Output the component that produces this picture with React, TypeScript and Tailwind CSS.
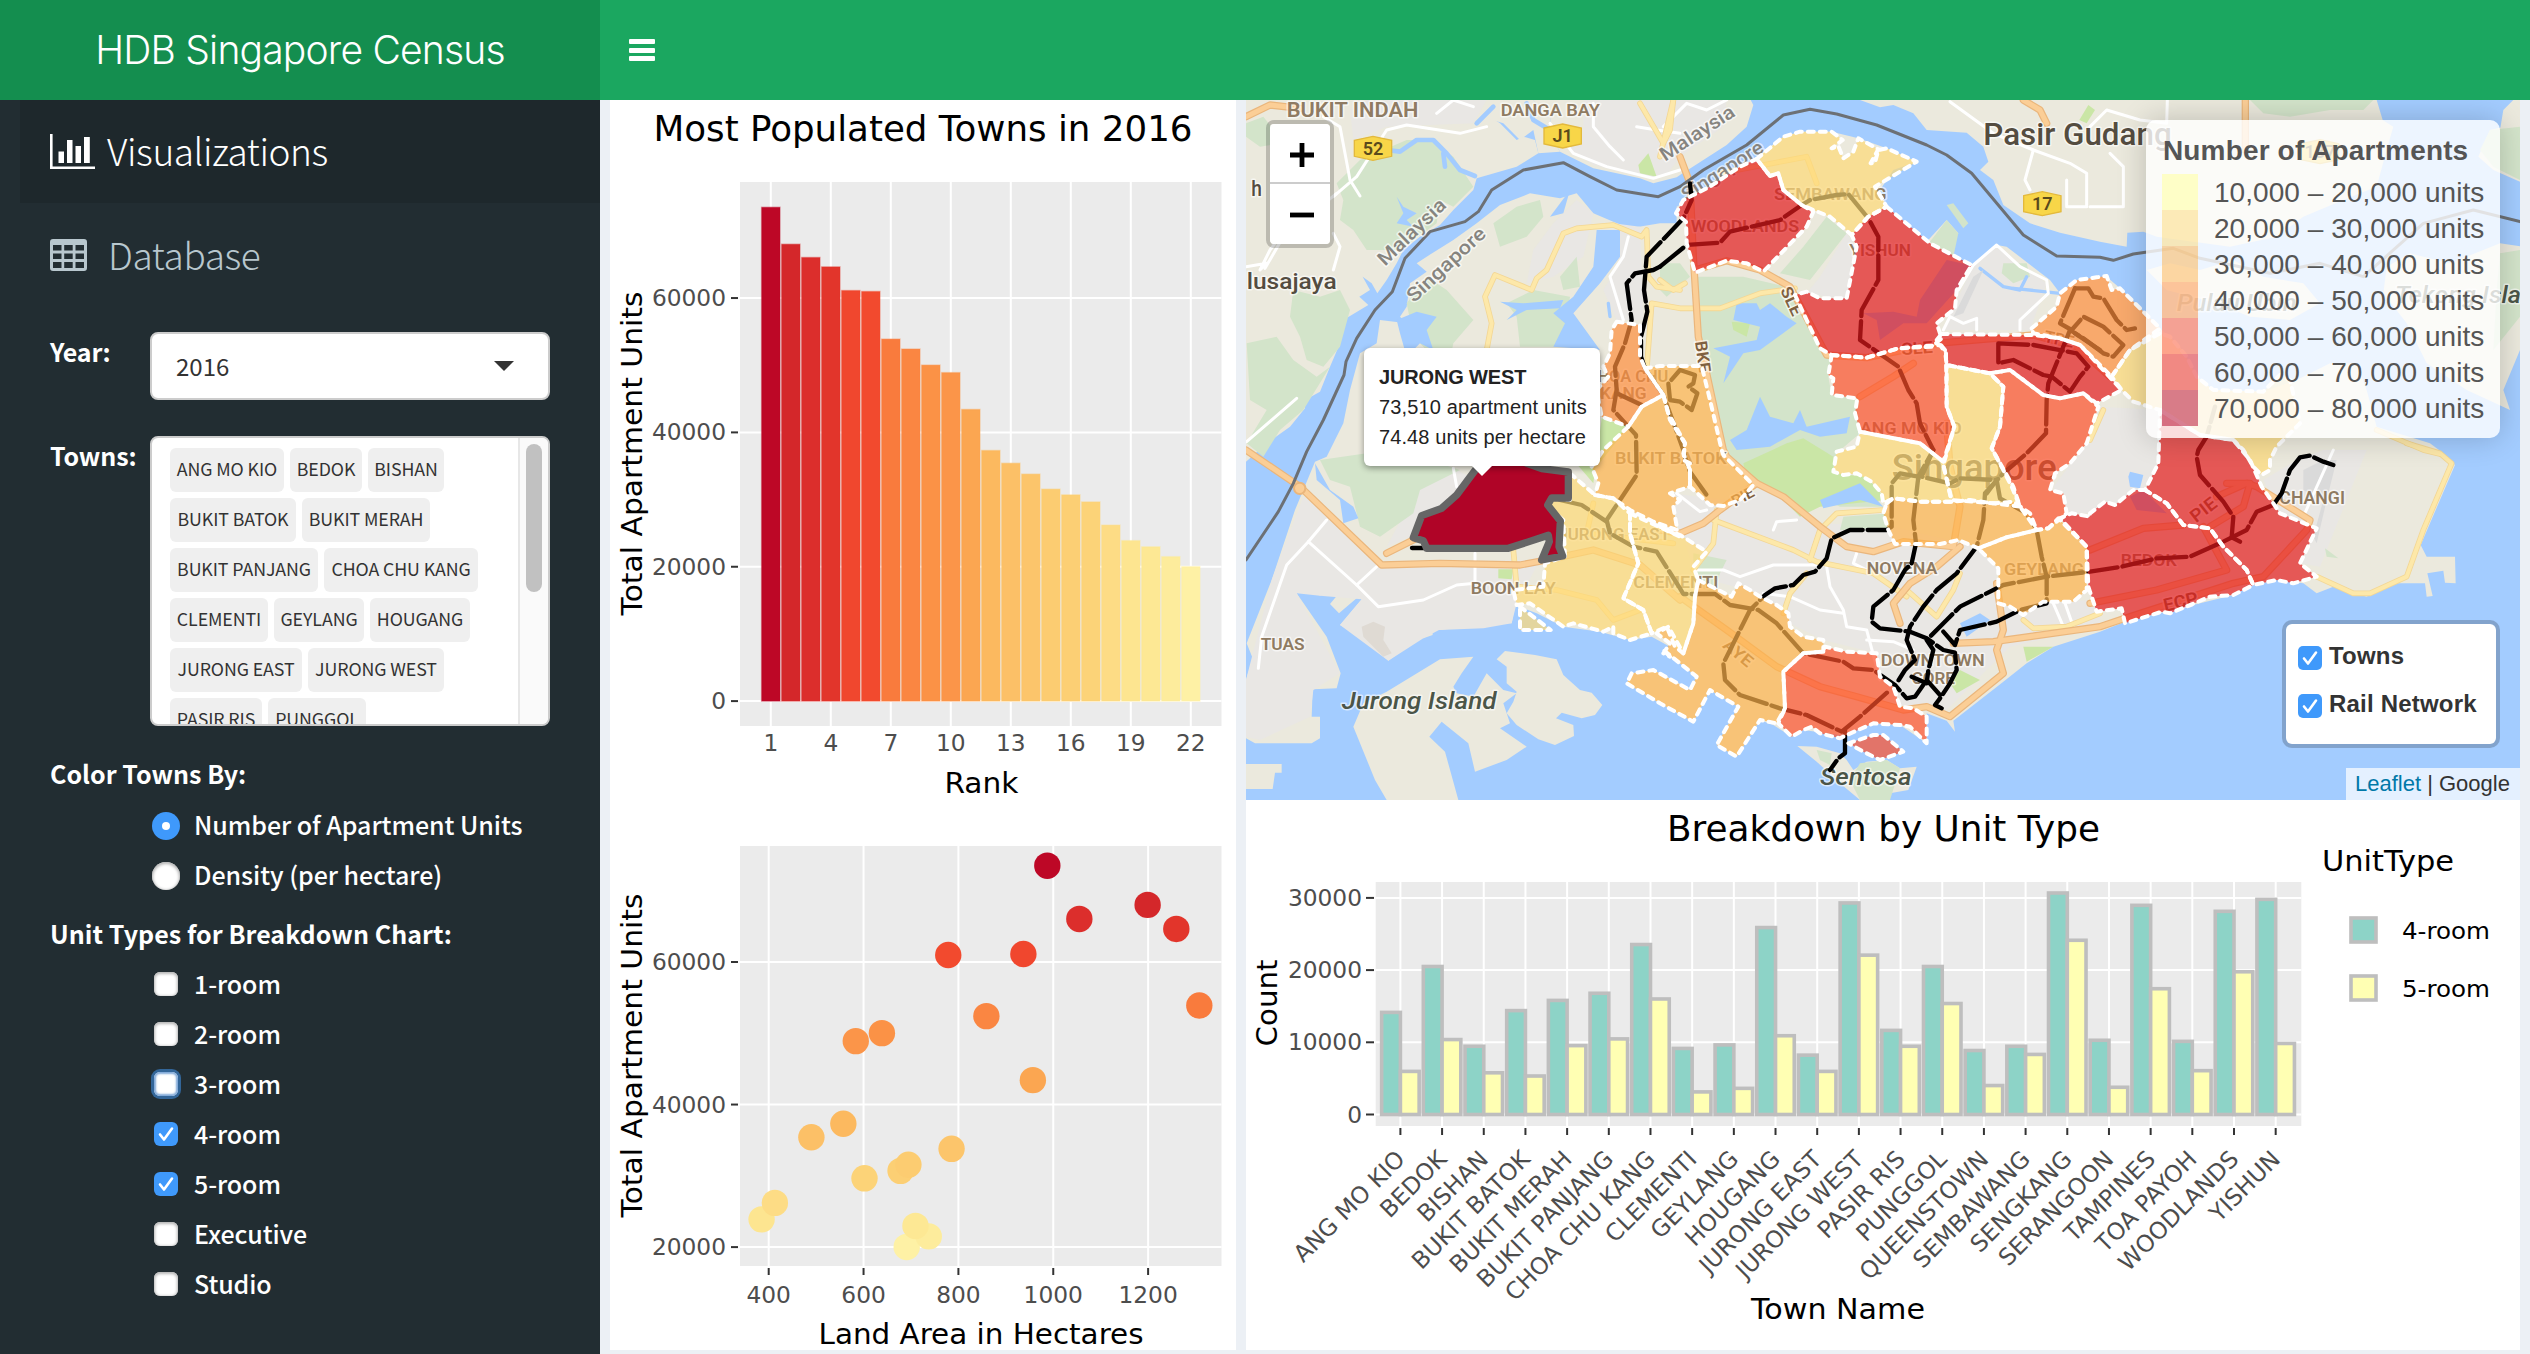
import React from 'react';

/* ---------- Data ---------- */

const RANKED = [
  { units: 73510, area: 987.5, color: '#bd0726' },
  { units: 68010, area: 1199, color: '#d4272a' },
  { units: 66040, area: 1055, color: '#dc2e2c' },
  { units: 64640, area: 1259.5, color: '#e2352b' },
  { units: 61120, area: 937, color: '#f0472e' },
  { units: 60980, area: 778.6, color: '#f24a2e' },
  { units: 53890, area: 1308, color: '#f97b3d' },
  { units: 52410, area: 859, color: '#fa8642' },
  { units: 50020, area: 638.7, color: '#fb9246' },
  { units: 48900, area: 583.6, color: '#fb9549' },
  { units: 43420, area: 957, color: '#fba651' },
  { units: 37310, area: 557.4, color: '#fcb95f' },
  { units: 35410, area: 490, color: '#fcc067' },
  { units: 33790, area: 785.6, color: '#fcc56b' },
  { units: 31550, area: 694.6, color: '#fccc71' },
  { units: 30700, area: 678, color: '#fccf74' },
  { units: 29650, area: 602, color: '#fcd378' },
  { units: 26200, area: 413, color: '#fddc85' },
  { units: 23890, area: 385, color: '#fde590' },
  { units: 22970, area: 709.5, color: '#fde894' },
  { units: 21500, area: 737.5, color: '#fdec9c' },
  { units: 20020, area: 691, color: '#fef1a5' },
];

const BREAKDOWN: [string, number, number][] = [
  ['ANG MO KIO', 14140, 5970],
  ['BEDOK', 20500, 10380],
  ['BISHAN', 9450, 5775],
  ['BUKIT BATOK', 14390, 5330],
  ['BUKIT MERAH', 15800, 9540],
  ['BUKIT PANJANG', 16790, 10470],
  ['CHOA CHU KANG', 23540, 16000],
  ['CLEMENTI', 9150, 3130],
  ['GEYLANG', 9640, 3620],
  ['HOUGANG', 25890, 10910],
  ['JURONG EAST', 8220, 5970],
  ['JURONG WEST', 29300, 22070],
  ['PASIR RIS', 11650, 9450],
  ['PUNGGOL', 20500, 15370],
  ['QUEENSTOWN', 8860, 4010],
  ['SEMBAWANG', 9450, 8320],
  ['SENGKANG', 30680, 24130],
  ['SERANGOON', 10280, 3770],
  ['TAMPINES', 28970, 17420],
  ['TOA PAYOH', 10130, 6070],
  ['WOODLANDS', 28140, 19770],
  ['YISHUN', 29800, 9840],
];

/* ---------- Sidebar ---------- */

const TAG_ROWS: [string, string][][] = [
  [['ANG MO KIO', 'w-[114px]'], ['BEDOK', 'w-[72px]'], ['BISHAN', 'w-[76px]']],
  [['BUKIT BATOK', 'w-[126px]'], ['BUKIT MERAH', 'w-[128px]']],
  [['BUKIT PANJANG', 'w-[148px]'], ['CHOA CHU KANG', 'w-[154px]']],
  [['CLEMENTI', 'w-[98px]'], ['GEYLANG', 'w-[90px]'], ['HOUGANG', 'w-[100px]']],
  [['JURONG EAST', 'w-[132px]'], ['JURONG WEST', 'w-[136px]']],
  [['PASIR RIS', 'w-[92px]'], ['PUNGGOL', 'w-[98px]']],
];

function Check() {
  return (
    <svg viewBox="0 0 24 24" className="h-6 w-6">
      <path d="M6 12.5 10 17.5 18 6.5" fill="none" stroke="#fff" strokeWidth="2.6" strokeLinecap="round" strokeLinejoin="round" />
    </svg>
  );
}

function CheckRow({ label, state }: { label: string; state?: 'checked' | 'focus' }) {
  const box =
    state === 'checked'
      ? 'bg-[#3f99fb]'
      : state === 'focus'
        ? 'bg-white shadow-[0_0_0_3px_#336699,inset_0_0_2px_2px_#7fa8d8]'
        : 'bg-white shadow-[inset_0_1px_3px_1px_#b5b5b5]';
  return (
    <div className="flex h-[50px] items-center pl-[154px]">
      <span className={`h-6 w-6 shrink-0 rounded-[6px] ${box}`}>{state === 'checked' && <Check />}</span>
      <span className="mb-[3px] ml-[16px] whitespace-nowrap text-[25px] leading-[30px] font-medium tracking-[-0.1px]">{label}</span>
    </div>
  );
}

function Sidebar() {
  return (
    <aside className="flex w-[600px] shrink-0 flex-col overflow-hidden bg-[#222d32] font-['Noto_Sans_CJK_SC','Noto_Sans',sans-serif] text-white">
      <div className="ml-5 flex h-[103px] items-center bg-[#1e282c] pl-[30px]">
        <svg viewBox="0 0 45 35" className="h-[35px] w-[45px]" fill="#fff">
          <path d="M0 0h2.6v32.4H45V35H0zM8.500 17.500h5.500v11.500H8.500zM17 6h5.500v23H17zM25.500 12h5.500v17h-5.500zM34 3h5.800v26H34z" />
        </svg>
        <span className="mb-[4px] ml-[12px] text-[37px] leading-[50px] font-light tracking-[-0.4px]">Visualizations</span>
      </div>
      <div className="ml-5 flex h-[103px] items-center pl-[30px] text-[#b8c7ce]">
        <svg viewBox="0 0 37 32" className="h-[32px] w-[37px]">
          <path
            fill="currentColor"
            fillRule="evenodd"
            d="M3 0h31a3 3 0 0 1 3 3v26a3 3 0 0 1-3 3H3a3 3 0 0 1-3-3V3a3 3 0 0 1 3-3zM3 6v5.500h8.500V6zM14.200 6v5.500h8.500V6zM25.500 6v5.500H34V6zM3 14.500V20h8.500v-5.500zM14.200 14.500V20h8.500v-5.500zM25.500 14.500V20H34v-5.500zM3 23v6h8.500v-6zM14.200 23v6h8.500v-6zM25.500 23v6H34v-6z"
          />
        </svg>
        <span className="mb-[2px] ml-[21px] text-[37px] leading-[50px] font-light tracking-[-0.4px]">Database</span>
      </div>
      <div className="mt-[26px] flex">
        <div className="w-[100px] pt-[2px] pl-[50px] text-[25px] leading-[34px] font-bold tracking-[-0.2px]">Year:</div>
        <div className="ml-[50px] flex h-[68px] w-[400px] items-center justify-between rounded-[8px] border-2 border-[#ccc] bg-white pr-[34px] pl-[24px] text-[24px] text-[#333]">
          <span>2016</span>
          <svg viewBox="0 0 20 10" className="h-[10px] w-5">
            <path d="M0 0H20L10 10z" fill="#333" />
          </svg>
        </div>
      </div>
      <div className="mt-9 flex">
        <div className="w-[100px] pt-[2px] pl-[50px] text-[25px] leading-[34px] font-bold whitespace-nowrap tracking-[-0.1px]">Towns:</div>
        <div className="ml-[50px] flex h-[290px] w-[400px] overflow-hidden rounded-[8px] border-2 border-[#ccc] bg-white">
          <div className="flex flex-1 flex-col gap-[6px] pt-[10px] pl-[18px]">
            {TAG_ROWS.map((row, i) => (
              <div key={i} className="flex shrink-0 gap-[6px]">
                {row.map(([name, w]) => (
                  <span key={name} className={`flex h-11 items-center justify-center rounded-[6px] bg-[#efefef] pb-[3px] text-[17.800px] tracking-[-0.1px] whitespace-nowrap text-[#333] ${w}`}>
                    {name}
                  </span>
                ))}
              </div>
            ))}
          </div>
          <div className="w-[30px] border-l-2 border-[#e7e7e7] bg-[#fafafa] pt-[6px] pl-[6px]">
            <div className="h-[148px] w-4 rounded-full bg-[#c1c1c1]" />
          </div>
        </div>
      </div>
      <div className="mt-[30px] pl-[50px] text-[25px] leading-[34px] font-bold tracking-[0.03px]">Color Towns By:</div>
      <div className="mt-[11px] flex h-[50px] items-center pl-[152px]">
        <span className="flex h-7 w-7 items-center justify-center rounded-full bg-[#3f99fb]">
          <span className="h-2 w-2 rounded-full bg-white" />
        </span>
        <span className="mb-[4px] ml-[14px] text-[25px] leading-[30px] font-medium whitespace-nowrap tracking-[-0.05px]">Number of Apartment Units</span>
      </div>
      <div className="flex h-[50px] items-center pl-[152px]">
        <span className="h-7 w-7 rounded-full bg-white shadow-[inset_0_1px_3px_1px_#b5b5b5]" />
        <span className="mb-[4px] ml-[14px] text-[25px] leading-[30px] font-medium whitespace-nowrap tracking-[-0.05px]">Density (per hectare)</span>
      </div>
      <div className="mt-[15px] mb-[9px] pl-[50px] text-[25px] leading-[34px] font-bold whitespace-nowrap tracking-[0.05px]">
        Unit Types for Breakdown Chart:
      </div>
      <CheckRow label="1-room" />
      <CheckRow label="2-room" />
      <CheckRow label="3-room" state="focus" />
      <CheckRow label="4-room" state="checked" />
      <CheckRow label="5-room" state="checked" />
      <CheckRow label="Executive" />
      <CheckRow label="Studio" />
    </aside>
  );
}

/* ---------- Charts ---------- */

const CHART_FONT = "font-['DejaVu_Sans',Verdana,sans-serif]";

function Label({ x, y, size, w, children, anchor = 'middle', fill = '#000', vertical }: {
  x: number; y: number; size: number; w?: number; children: React.ReactNode; anchor?: 'start' | 'middle' | 'end'; fill?: string; vertical?: boolean;
}) {
  return (
    <text x={x} y={y} fontSize={size} textAnchor={anchor} fill={fill} textLength={w} lengthAdjust="spacingAndGlyphs" transform={vertical ? `rotate(-90 ${x} ${y})` : undefined}>
      {children}
    </text>
  );
}

function RankCharts() {
  const x = (rank: number) => 770.8 + (rank - 1) * 20;
  const y = (v: number) => 701.1 - (v / 20000) * 134.35;
  const sx = (a: number) => 768.7 + ((a - 400) / 200) * 94.85;
  const sy = (v: number) => 1247.1 - ((v - 20000) / 20000) * 142.55;
  return (
    <svg viewBox="610 100 626 1250" className={`h-[1250px] w-[626px] ${CHART_FONT}`}>
      <Label x={923} y={140.5} size={35} w={539}>Most Populated Towns in 2016</Label>
      <rect x="740" y="182" width="481.500" height="544" fill="#ebebeb" />
      {[0, 20000, 40000, 60000].map((v) => (
        <g key={v}>
          <path d={`M740 ${y(v)}H1221.500`} stroke="#fff" strokeWidth="2" />
          <path d={`M731 ${y(v)}H738`} stroke="#333" strokeWidth="2" />
          <Label x={726} y={y(v) + 8} size={23.300} anchor="end" fill="#4d4d4d">{v}</Label>
        </g>
      ))}
      {[1, 4, 7, 10, 13, 16, 19, 22].map((r) => (
        <g key={r}>
          <path d={`M${x(r)} 182V726`} stroke="#fff" strokeWidth="2" />
          <Label x={x(r)} y={750.500} size={23.300} fill="#4d4d4d">{r}</Label>
        </g>
      ))}
      {RANKED.map((t, i) => (
        <rect key={i} x={x(i + 1) - 9.200} y={y(t.units)} width="18.400" height={y(0) - y(t.units)} fill={t.color} stroke={t.color} strokeWidth="1.400" strokeOpacity="0.4" />
      ))}
      <Label x={981.400} y={793} size={29.200} w={74}>Rank</Label>
      <Label x={641.500} y={453.500} size={29.200} w={324} vertical>Total Apartment Units</Label>

      <rect x="740" y="846" width="481.500" height="420" fill="#ebebeb" />
      {[20000, 40000, 60000].map((v) => (
        <g key={v}>
          <path d={`M740 ${sy(v)}H1221.500`} stroke="#fff" strokeWidth="2" />
          <path d={`M731 ${sy(v)}H738`} stroke="#333" strokeWidth="2" />
          <Label x={726} y={sy(v) + 8} size={23.300} anchor="end" fill="#4d4d4d">{v}</Label>
        </g>
      ))}
      {[400, 600, 800, 1000, 1200].map((a) => (
        <g key={a}>
          <path d={`M${sx(a)} 846V1266`} stroke="#fff" strokeWidth="2" />
          <path d={`M${sx(a)} 1268V1275`} stroke="#333" strokeWidth="2" />
          <Label x={sx(a)} y={1302.500} size={23.300} fill="#4d4d4d">{a}</Label>
        </g>
      ))}
      {[...RANKED].reverse().map((t, i) => (
        <circle key={i} cx={sx(t.area)} cy={sy(t.units)} r="13.200" fill={t.color} />
      ))}
      <Label x={981} y={1343.500} size={29.200} w={325}>Land Area in Hectares</Label>
      <Label x={641.500} y={1055.500} size={29.200} w={324} vertical>Total Apartment Units</Label>
    </svg>
  );
}

function BreakdownChart() {
  const x = (i: number) => 1400.400 + i * 41.680;
  const y = (v: number) => 1114.500 - (v / 10000) * 72.200;
  const half = 18.750;
  return (
    <svg viewBox="1246 800 1274 550" className={`h-[550px] w-[1274px] ${CHART_FONT}`}>
      <Label x={1883.500} y={840.5} size={35} w={433}>Breakdown by Unit Type</Label>
      <rect x="1375.700" y="882" width="925.600" height="244" fill="#ebebeb" />
      {[0, 10000, 20000, 30000].map((v) => (
        <g key={v}>
          <path d={`M1375.700 ${y(v)}H2301.300`} stroke="#fff" strokeWidth="2" />
          <path d={`M1366 ${y(v)}H1374`} stroke="#333" strokeWidth="2" />
          <Label x={1362} y={y(v) + 8} size={23.300} anchor="end" fill="#4d4d4d">{v}</Label>
        </g>
      ))}
      {BREAKDOWN.map(([name, four, five], i) => (
        <g key={name}>
          <path d={`M${x(i)} 882V1126`} stroke="#fff" strokeWidth="2" />
          <path d={`M${x(i)} 1128V1135`} stroke="#333" strokeWidth="2" />
          <rect x={x(i) - half} y={y(four)} width={half} height={y(0) - y(four)} fill="#8dd3c7" stroke="#bebebe" strokeWidth="3.600" />
          <rect x={x(i)} y={y(five)} width={half} height={y(0) - y(five)} fill="#ffffb3" stroke="#bebebe" strokeWidth="3.600" />
          <text x={x(i) + 6} y={1160.500} fontSize="23.400" textAnchor="end" fill="#4d4d4d" transform={`rotate(-45 ${x(i) + 6} 1160.500)`}>
            {name}
          </text>
        </g>
      ))}
      <Label x={1838} y={1319.400} size={29.200} w={174}>Town Name</Label>
      <Label x={1277} y={1003} size={29.200} w={87} vertical>Count</Label>
      <Label x={2322} y={870.700} size={29.200} w={132} anchor="start">UnitType</Label>
      <rect x="2351" y="918" width="25" height="24" fill="#8dd3c7" stroke="#bebebe" strokeWidth="3.600" />
      <rect x="2351" y="976" width="25" height="24" fill="#ffffb3" stroke="#bebebe" strokeWidth="3.600" />
      <Label x={2402} y={939} size={23.300} w={88} anchor="start">4-room</Label>
      <Label x={2402} y={997} size={23.300} w={88} anchor="start">5-room</Label>
    </svg>
  );
}

/* ---------- Map ---------- */

/* Origin of every map tile; geometry is stored relative to its tile. */
const TILE: Record<string, [number, number]> = {
  a: [0, 0], b: [1260, 0], c: [2550, 0],
  d: [0, 1080], e: [1260, 1080], f: [2550, 1080],
};

/* "a 10,20 30,40 b 5,6" -> list of points in map space */
function pts(src: string): string {
  let o: [number, number] = [0, 0];
  const out: string[] = [];
  src.trim().split(/\s+/).forEach((tok) => {
    if (TILE[tok]) { o = TILE[tok]; return; }
    const [px, py] = tok.split(',').map(Number);
    out.push(`${px + o[0]},${py + o[1]}`);
  });
  return out.join(' ');
}

const LAND = [
  'a 18,30 740,30 760,50 800,30 880,30 930,80 940,150 960,185 1060,235 1200,265 1240,280 1310,262 b 60,255 130,210 200,165 260,110 280,45 272,30 a 18,30 18,1115 80,1060 150,1010 195,955 195,930 240,905 270,830 300,760 310,690 385,645 358,620 390,600 368,560 395,580 412,610 440,570 470,520 490,480 540,440 600,405 640,360 700,300 710,265 830,230 895,190 885,150 850,140 830,150 780,100 750,80 740,30',
  'a 18,30 880,30 930,80 940,150 960,185 895,190 880,120 840,150 790,100 740,85 690,100 500,150 18,300',
  'b 600,30 660,52 700,45 760,70 800,120 920,128 970,170 985,215 960,240 1000,270 1030,345 1110,400 1200,428 1320,455 c 110,470 112,428 160,425 200,440 420,470 560,440 640,380 760,330 860,290 890,180 910,110 878,90 860,30',
  'c 1270,30 1300,30 1300,110 1230,120 1240,60',
  'c 1165,200 1200,120 1290,100 1290,275 1210,240',
  'c 170,540 240,520 330,540 430,510 520,560 640,580 690,640 600,690 480,680 380,640 230,600',
  'c 890,530 960,490 1080,520 1230,460 1300,470 1290,780 1240,900 1260,960 1130,900 1010,820 950,700 880,610',
  'd 225,35 165,180 95,390 20,580 38,625 18,690 18,865 45,880 215,880 240,865 240,800 215,800 218,718 290,715 302,670 260,560 170,430 195,395 240,437 300,390 320,402 270,462 297,490 355,440 365,448 300,525 365,560 445,632 515,580 470,510 470,480 497,480 505,525 550,565 578,555 570,455 585,460 597,540 685,530 690,480 710,468 735,495 732,535 760,518 815,520 825,465 890,490 970,530 1080,545 1170,570 1235,560 1290,590 e 10,600 110,680 90,720 40,690 d 1240,660 1175,670 1160,700 e 0,760 100,815 150,720 235,770 170,885 230,920 300,810 340,825 395,860 430,840 540,855 640,820 720,825 800,880 800,790 860,812 885,845 880,812 1030,695 1100,640 1180,590 1320,545 f 105,515 210,490 430,435 490,405 560,390 640,400 680,430 730,410 830,440 900,400 1005,400 1010,440 1028,438 1012,370 1060,362 1065,398 1097,400 1095,320 1010,320 992,285 1095,45 1060,10 c 1020,1060 860,1010 830,900 800,820 720,820 620,870 520,905 370,900 320,860 270,770 210,715 90,595 50,560 b 1250,570 1200,610 1170,570 1040,470 1010,465 935,525 850,490 895,430 860,390 800,455 740,400 680,350 660,300 700,240 770,215 680,175 595,145 515,125 420,125 370,140 280,207 150,290 50,350 a 1310,400 1260,400 1170,415 1120,395 1060,370 1010,310 960,325 870,310 780,345 710,400 640,450 560,500 530,520 560,545 510,580 500,650 480,680 500,700 420,690 410,760 360,790 330,900 310,1000 260,1100',
  'd 440,725 600,628 700,620 665,670 640,710 650,730 700,740 740,670 790,720 830,730 790,760 810,820 780,835 860,890 800,930 705,965 685,880 605,815 568,860 615,905 655,1050 440,1050 405,990 340,830 370,760',
  'd 770,628 795,603 885,615 950,628 970,675 1020,720 1055,728 1087,765 1065,795 1025,805 965,788 948,805 1000,825 1002,858 945,885 895,868 830,825 800,790 820,755 830,725 800,700 800,650',
  'd 18,942 125,942 125,968 105,968 98,1017 18,1017',
  'e 412,888 470,890 540,910 560,930 580,960 620,935 680,930 720,955 770,950 745,1020 690,1030 680,1050 600,1050 540,1000 470,935',
];

const URBAN = [
  'a 380,30 740,30 700,100 440,110 340,150 330,60',
  'a 1030,30 1320,30 b 200,30 190,110 60,200 20,255 a 1240,270 1060,225 980,170 1030,130',
  'a 940,400 1010,330 1060,370 1030,500 940,560 860,580 880,480',
  'a 1120,400 1200,410 1210,690 1130,690 1090,600 1140,520',
  'b 440,610 560,630 590,470 560,430 480,560',
  'b 850,720 940,525 1010,470 1160,580 1110,720',
  'd 190,140 300,210 430,340 900,330 830,460 815,520 730,535 597,540 550,565 445,632 300,525 365,448 240,437 170,430 300,670 220,720 210,800 60,870 18,860 18,690 95,390',
  'd 530,120 580,70 650,60 690,80 620,170 540,190 510,260 440,290',
  'e 30,130 200,150 340,110 480,220 700,230 950,290 1010,350 1010,460 1150,455 1320,450 1320,530 1050,590 860,780 800,760 720,770 660,680 650,610 490,570 390,520 300,430 110,380 60,240',
  'c 30,950 210,960 205,1130 f 160,115 75,165 0,190 e 1220,190 1180,110 b 1280,1060',
  'f 520,90 620,30 700,0 830,0 690,350 630,340 680,235 570,190',
];

const PARK = [
  'a 18,100 70,80 110,130 120,160 60,170 18,140',
  'a 360,210 500,150 570,150 640,200 700,290 640,350 600,330 590,400 480,480 380,480 340,420 300,390 310,330 290,280',
  'a 20,760 110,740 160,810 230,860 270,830 190,960 120,1020 70,1100 20,1060 80,960 30,930',
  'a 160,600 240,620 300,600 330,660 300,770 250,830 200,810 180,740 150,680',
  'a 500,640 560,560 620,600 700,690 640,760 620,860 560,780 520,740',
  'a 760,400 830,350 900,330 910,380 860,440 780,470',
  'a 880,600 990,620 980,690 1050,760 960,770 840,770 830,680 800,640',
  'a 960,560 1010,500 1020,590 970,600',
  'd 240,30 380,10 540,20 660,60 540,120 520,190 420,260 360,230 330,110 270,90',
  'b 105,560 250,560 380,590 405,640 480,775 515,800 505,860 515,915 590,925 600,1030 530,1090 e 520,60 600,90 670,170 540,170 450,130 340,100 260,90 b 190,1080 150,930 125,800 105,700',
  'b 430,470 500,380 560,430 450,570 360,550',
  'b 0,520 60,520 90,560 20,620 0,600',
  'b 810,455 860,390 895,430 880,500',
  'b 1030,520 1100,520 1110,560 1060,580 1025,550',
  'b 860,345 880,340 925,400 910,415',
  'e 100,310 200,330 180,370 160,430 100,400',
  'e 550,200 690,190 690,235 540,240',
  'c 480,30 850,30 820,60 720,60 600,80 520,70',
  'c 1170,180 1200,120 1290,110 1290,270 1210,230',
  'c 1230,490 1290,480 1290,680 1210,780 1220,600',
  'f 705,295 745,325 710,320',
  'e 470,900 515,910 510,945 480,930',
  'e 600,940 680,930 720,955 690,1050 600,1050 570,990',
];

const BRIGHT = [
  'a 1195,225 1225,190 1250,260 1200,250',
  'b 1258,90 1285,45 1305,60 1280,100',
  'b 215,695 270,700 260,740 220,720',
  'b 250,1120 380,1060 430,1045 520,1100 e 520,70 620,80 680,150 480,170 420,200 340,120 260,90',
  'a 1085,985 1165,1010 1070,1130 d 1055,50 1000,30 1060,100',
  'd 775,358 820,358 815,388 775,385',
  'e 870,700 900,660 960,690 890,730',
  'e 1090,590 1180,590 1100,635',
];

const PALE_WATER = [
  'a 470,690 530,665 590,680 560,720 580,780 540,760 500,800 480,730',
  'a 940,670 1000,620 1060,530 1070,420 1140,420 1140,500 1080,580 1000,670 1080,780 940,770 975,700',
  'a 780,635 850,640 970,630 960,655 860,660 800,690 830,660',
  'a 930,380 990,300 970,370',
  'a 470,320 490,350 530,370 500,390 520,410 470,400 490,370',
  'b 220,690 230,640 290,640 300,660 330,640 380,680 410,700 300,780 250,790 190,880 210,800 160,775 290,750 300,710',
  'b 210,1050 260,1020 300,920 330,980 400,1000 420,960 440,1010 570,980 560,1030 480,1040 420,1020 330,1070 230,1080',
  'e 480,150 600,100 670,170 600,150 490,175',
  'b 610,670 700,665 770,680 780,630 860,510 930,525 890,600 800,700 730,700 660,750 650,690',
  'd 225,40 270,120 340,170 355,205 310,220 300,150 230,90',
  'e 900,520 960,490 990,510 920,560',
  'f 115,80 120,65 160,75 150,115 120,110',
  'f 120,140 160,120 230,190 140,180',
];

const WHITE_ROADS = [
  'a 250,80 300,110 330,270 360,318',
  'a 280,320 350,260 440,120 500,105 660,130 740,110',
  'a 18,530 80,520 60,540 90,480 120,440',
  'a 75,535 130,440 290,310',
  'a 280,430 300,470 280,540',
  'a 590,70 640,30 700,50',
  'a 930,100 1000,190 1100,230 1240,265 1320,240',
  'a 1060,40 1060,110 1110,170 1150,210',
  'a 1190,110 1250,120 1320,130',
  'a 1165,440 1150,500 1110,560 1150,690',
  'a 20,1055 170,925',
  'b 10,110 80,40 140,60 200,30',
  'b 870,35 1000,130 1120,180 1230,220 1280,250 1280,350 1220,350 1220,270',
  'b 1120,180 1095,270 1110,300',
  'b 850,720 870,680 910,700 950,685 950,720',
  'b 895,600 940,525 1010,465 1080,530 1160,570 1165,610 1080,690 1080,720',
  'c 0,110 50,60 150,90 230,100 232,30',
  'c 60,190 100,230 100,350 0,350',
  'd 55,655 65,560 140,345 205,275 350,405 415,470 550,450 650,405 705,400 705,310',
  'd 350,405 410,350',
  'd 205,275 260,210',
  'd 640,55 650,110',
  'e 340,240 350,215 410,210',
  'e 100,360 190,360 240,380 340,345 490,345',
  'e 500,350 510,410 550,480 560,530 620,540 660,690',
  'e 310,430 390,440 480,480 550,490',
  'e 590,310 580,340 640,370',
  'e 620,570 700,575 760,600',
  'e 1180,460 1210,530 1240,530 1215,460',
  'e 50,130 120,185 140,180',
  'f 640,200 730,0',
];

const YELLOW_ROADS = [
  'a 740,780 755,700 735,620 765,555 875,600 890,565 920,540 970,430 1010,415 1120,405 1205,440 1220,420 1225,560 1250,590 1320,600',
  'a 1220,840 1235,640 1320,655 b 180,655 300,610 405,595',
  'a 1200,40 1270,160 1290,120 1300,30',
  'b 0,570 40,600 75,580',
  'b 0,200 40,30',
  'b 180,250 440,200 470,280',
  'e 160,210 400,300 470,335 640,370 740,440',
  'e 100,360 160,280 170,180',
  'e 450,330 480,240 530,190 670,180',
  'e 370,490 390,430 440,370',
  'e 740,420 830,500 880,420 900,370',
  'e 1090,510 1120,535 1220,530 1320,490',
  'f 950,-20 1050,10 1085,40 1000,240 950,380 840,430 790,430 680,380',
  'd 820,300 830,410 950,420 1070,450 1120,510 1200,480',
  'd 1060,160 1040,250 1300,280',
  'c 860,1020 1000,1080 1050,1092',
  'c 40,960 0,1050',
];

const ORANGE_ROADS = [
  'a 18,80 90,45 180,55',
  'd 18,0 180,110 425,345 600,340 840,345 920,330 1060,300 1200,345 1320,450 e 60,440 200,540 350,650 480,710 590,740 730,780 800,770 870,800 1030,670 1010,600 1030,540 1010,400',
  'd 440,310 530,265',
  'b 60,200 90,280 100,500 115,740 140,850 190,1080 e 200,20 290,100 370,140 480,230 560,290 640,305 730,275 880,290 900,170 870,50 b 860,1000',
  'b 105,540 200,512 300,540 390,590 500,795 620,803 830,760 1120,735 1250,770 c 60,860',
  'e 0,240 60,250 130,220 180,180 290,100',
  'e 900,290 830,350 750,400 700,460 720,520',
  'e 880,580 1000,575 1320,530 f 105,505 430,400 520,380 650,240 660,210 500,110 470,100 380,140',
  'b 1090,30 1140,60 1160,100',
  'c 466,30 466,180',
  'f 0,300 160,235 280,225',
  'f 410,100 480,100 460,170 360,230',
  'f 0,460 200,420 410,360 340,230',
  'b 600,920 700,860 760,820',
];

const TOWNS: { fill: string; shape: string }[] = [
  { fill: '#e31a1c', shape: 'b 290,207 330,258 355,250 370,300 425,345 460,365 440,410 310,545 260,520 200,512 105,548 80,460 78,395 48,370 70,330 150,290 240,230' },
  { fill: '#fed976', shape: 'b 290,207 370,140 420,125 515,125 548,150 515,175 535,168 550,205 580,185 595,145 655,178 632,220 645,218 655,180 680,175 770,215 645,290 680,350 625,380 575,435 510,380 460,360 425,345 370,300 355,250 330,258' },
  { fill: '#e31a1c', shape: 'b 680,350 810,460 935,525 890,600 885,655 830,700 845,745 815,770 715,775 620,803 515,795 480,775 440,690 405,615 440,605 480,625 560,625 590,470 575,435 625,380' },
  { fill: '#fc4e2a', shape: 'b 515,795 620,803 715,775 840,765 858,790 860,950 883,1010 850,1115 780,1060 600,1025 585,970 592,925 515,915 520,865 505,855' },
  { fill: '#fed976', shape: 'b 860,825 990,850 1030,890 1020,1010 995,1075 e 1060,110 1080,170 1000,160 875,150 850,45 b 883,1010 860,950' },
  { fill: '#fed976', shape: 'b 600,1025 780,1060 850,1115 e 850,45 875,155 780,155 700,145 670,160 665,130 635,95 590,70 550,75 520,65 b 530,1085 590,1070' },
  { fill: '#fc4e2a', shape: 'b 990,850 1050,840 1150,915 1200,925 1270,910 1315,950 1280,1060 1230,1120 e 1185,70 1170,120 1210,130 1220,190 1165,235 1130,240 1080,170 1055,110 1030,60 b 995,1075 1020,1010 1030,890' },
  { fill: '#e31a1c', shape: 'b 845,732 1120,735 1200,745 1260,765 c 95,900 20,940 b 1270,910 1200,925 1150,915 1050,840 990,850 860,825 855,780 830,750' },
  { fill: '#fd8d3c', shape: 'b 1115,715 1190,650 1200,610 1250,570 1310,562 c 50,558 65,600 90,595 210,715 120,780 65,860 b 1260,765 1200,745 1120,730' },
  { fill: '#fed976', shape: 'c 65,860 120,780 210,730 240,740 290,800 320,860 370,900 520,905 570,855 600,870 630,1000 560,1070 540,1110 f 540,60 515,75 490,50 460,0 c 430,1050 330,1035 210,960 130,935 95,900' },
  { fill: '#e31a1c', shape: 'c 210,960 330,1035 430,1050 480,1110 f 515,110 550,160 570,190 680,235 630,340 680,380 610,400 560,390 490,405 470,360 400,290 360,235 280,225 230,160 165,120 205,40' },
  { fill: '#e31a1c', shape: 'f 165,120 230,160 280,225 360,235 400,290 470,360 490,405 430,435 360,440 240,490 215,485 105,520 95,475 20,485 e 1285,410 1280,290 1200,205 1235,190 1290,200 f 0,190 45,155 75,165 130,120' },
  { fill: '#feb24c', shape: 'e 955,295 1040,262 1130,240 1165,235 1195,205 1280,290 1280,420 1240,455 1150,455 1090,495 1050,470 1015,460 1015,355' },
  { fill: '#feb24c', shape: 'e 680,160 700,145 780,155 875,155 930,150 1000,160 1060,155 1110,190 1130,240 1040,262 955,295 895,270 840,282 705,282 685,240 670,190' },
  { fill: '#fc4e2a', shape: 'e 430,610 490,605 495,590 560,605 650,610 660,680 700,710 720,770 760,775 800,800 800,880 750,830 720,825 640,820 560,855 540,865 480,850 455,830 430,840 395,860 355,820 375,775 370,665' },
  { fill: '#fc4e2a', shape: 'e 565,880 640,855 670,855 730,905 660,930 610,905' },
  { fill: '#feb24c', shape: 'e 115,390 215,440 235,400 270,420 300,440 350,465 385,490 390,530 430,560 490,570 490,605 430,610 370,665 375,775 350,820 300,810 230,920 170,885 235,770 150,720 100,815 0,760 d 1160,700 1175,670 1240,660 e 90,720 110,680 10,600 d 1290,620 1270,610 1290,580 1250,550 1285,530 e 70,610 100,520 105,440' },
  { fill: '#fed976', shape: 'd 1170,190 1320,260 e 0,230 60,255 140,305 100,350 115,390 105,440 100,520 70,610 45,590 20,530 d 1235,550 1210,480 1150,445 1195,340 1170,250' },
  { fill: '#fed976', shape: 'd 990,70 1065,135 1120,145 1170,190 1170,250 1195,340 1150,445 1210,480 1235,550 1170,570 1120,550 1120,530 1090,545 1000,520 970,530 870,460 830,465 820,420 910,410 915,340 975,320 970,210 915,165 940,145 990,150' },
  { fill: '#fed976', shape: 'd 840,470 932,540 840,540' },
  { fill: '#fd8d3c', shape: 'a 1130,695 1200,705 1200,800 1215,835 1270,915 1205,950 1165,1010 1085,980 1070,900 1105,860 1090,830 1110,790 1115,720' },
  { fill: '#feb24c', shape: 'a 1270,915 1290,990 b 75,1060 70,1110 e 90,40 90,110 30,130 60,150 40,170 52,240 d 1240,215 1170,180 1120,145 1065,135 1075,100 1055,50 1090,0 a 1165,1010 1205,950' },
  { fill: '#feb24c', shape: 'a 1215,835 1260,828 b 125,828 150,930 185,1080 e 190,15 280,105 240,150 190,168 150,165 90,110 90,60 70,10 b 75,1060 25,970 10,915' },
];

const RAIL = [
  'b 90,280 95,330 70,385 a 1220,500 1212,600 1222,665 1203,740 1203,800 1215,835 1270,915 b 70,1080 e 75,20 90,65 140,135',
  'b 0,530 80,465 180,458 210,425 360,390 425,345 450,330 530,315 565,312 625,385 655,440 655,570 605,660 600,750 715,830 745,900 770,940 780,1000 820,1080 e 775,80 760,210 768,280 755,340 735,360 700,420 640,470 635,515 660,535 750,545 800,565 850,600 885,608 890,660 870,700 840,745 825,765 845,775',
  'b 0,530 a 1240,540 1185,550 1160,580 1175,690 1155,760 1125,830 1130,900 1120,960 1165,1010 1188,1035 d 1190,75 1100,210 1110,250 1180,290 1250,305 1320,415 e 70,432 165,432 210,465 295,480 350,520 430,610 550,635 580,655 640,660 705,705 740,745 765,740 800,690 840,735',
  'a 1130,910 1205,945',
  'd 960,150 1025,165 1100,215',
  'd 516,294 600,294',
  'e 820,0 785,80 870,100 900,85 1010,90 1020,145 1100,190 1130,240 1145,320 1160,380 1160,460 1080,480 1010,515 900,540 885,585 850,545',
  'e 775,80 720,70 695,100 695,230 680,240 570,240 515,265 500,325 465,365 430,375 400,405 345,415 315,435 270,480 215,590 190,640 195,690 240,735 360,775 440,795 545,845 600,800 690,720',
  'b 1320,780 1230,720 1165,880 1160,930 1158,1030 1100,1090 e 1030,70 975,130 970,210 950,290 890,370 830,420 790,470 750,530 740,570 765,630 735,660 710,700',
  'e 1010,90 980,130',
  'f 550,165 500,185 470,240 400,275 300,320 200,325 95,350 0,365 e 1160,380 1030,405 900,470 860,510 800,570 820,600 805,660 800,700 755,680',
  'f 550,165 575,130 600,60 630,22 660,17 700,35 730,45',
  'f 450,275 425,262 430,200 400,155 330,75 320,20 c 325,1080 350,1040 375,950',
  'e 555,840 555,910 535,925 510,960',
  'b 1245,595 1285,595 1300,620 c 40,625 80,690 110,720 135,715',
  'b 1245,595 1200,700 1235,720 1270,680 c 0,690 40,710 100,765 70,800 40,790 b 1270,745 1230,720',
  'b 1015,760 1120,765 1250,790 1285,830 1260,860 1230,905 1175,860 1150,855 1060,810 1015,820 1015,760',
  'b 60,840 105,855 100,880 85,890 112,910 95,960 60,935 30,930 25,880 60,840',
];

const BORDER = [
  'd 18,330 115,185 160,100 200,5 a 250,990 312,855 318,815 350,745 405,660 457,605 495,505 570,425 675,395 715,365 755,300 850,240 970,218 1050,260 1130,300 1255,320 1320,290 b 130,240 260,165 370,75 450,58 530,72 650,105 800,165 860,195 935,250 1090,435 1190,498 1320,502 c 30,502 70,511 130,492 250,475 330,505 540,550 690,520 820,560 1000,400 1150,360 1290,395',
];

interface MapText { t: string; x: number; y: number; w: number; size?: number; kind?: 'area' | 'city' | 'island' | 'border' | 'road'; rot?: number }

const MAP_TEXT: MapText[] = [
  { t: 'BUKIT INDAH', x: 140, y: 82, w: 395, size: 62 },
  { t: 'DANGA BAY', x: 782, y: 79, w: 298, size: 50 },
  { t: 'lusajaya', x: 20, y: 598, w: 270, size: 68, kind: 'city' },
  { t: 'h', x: 34, y: 318, w: 32, size: 66, kind: 'city' },
  { t: 'Malaysia', x: 435, y: 530, w: 260, size: 58, kind: 'border', rot: -44 },
  { t: 'Singapore', x: 522, y: 640, w: 300, size: 58, kind: 'border', rot: -43 },
  { t: 'Malaysia', x: 1275, y: 215, w: 255, size: 58, kind: 'border', rot: -33 },
  { t: 'Singapore', x: 1340, y: 335, w: 280, size: 58, kind: 'border', rot: -33 },
  { t: 'CHOA CHU', x: 1040, y: 875, w: 245, size: 50 },
  { t: 'KANG', x: 1080, y: 927, w: 140, size: 50 },
  { t: 'BUKIT BATOK', x: 1125, y: 1122, w: 335, size: 50 },
  { t: 'WOODLANDS', x: 1352, y: 427, w: 325, size: 50 },
  { t: 'SEMBAWANG', x: 1602, y: 331, w: 338, size: 50 },
  { t: 'YISHUN', x: 1828, y: 499, w: 185, size: 50 },
  { t: 'ANG MO KIO', x: 1860, y: 1032, w: 305, size: 50 },
  { t: 'Pasir Gudang', x: 2230, y: 164, w: 565, size: 92, kind: 'city' },
  { t: 'BKE', x: 1365, y: 755, w: 95, size: 50, kind: 'road', rot: 82 },
  { t: 'SLE', x: 1620, y: 600, w: 90, size: 50, kind: 'road', rot: 65 },
  { t: 'SLE', x: 1985, y: 795, w: 95, size: 50, kind: 'road', rot: -4 },
  { t: 'TPE', x: 2410, y: 755, w: 90, size: 50, kind: 'road', rot: 12 },
  { t: 'PIE', x: 1485, y: 1250, w: 70, size: 46, kind: 'road', rot: -28 },
  { t: 'AYE', x: 1445, y: 1670, w: 100, size: 50, kind: 'road', rot: 40 },
  { t: 'PIE', x: 2868, y: 1300, w: 85, size: 54, kind: 'road', rot: -38 },
  { t: 'ECP', x: 2775, y: 1565, w: 105, size: 54, kind: 'road', rot: -13 },
  { t: 'JURONG EAST', x: 955, y: 1350, w: 335, size: 50 },
  { t: 'CLEMENTI', x: 1180, y: 1494, w: 255, size: 50 },
  { t: 'BOON LAY', x: 692, y: 1512, w: 255, size: 50 },
  { t: 'TUAS', x: 62, y: 1680, w: 132, size: 50 },
  { t: 'NOVENA', x: 1880, y: 1453, w: 212, size: 50 },
  { t: 'DOWNTOWN', x: 1922, y: 1728, w: 312, size: 50 },
  { t: 'CORE', x: 2015, y: 1783, w: 130, size: 50 },
  { t: 'GEYLANG', x: 2292, y: 1456, w: 240, size: 50 },
  { t: 'CHANGI', x: 3118, y: 1243, w: 197, size: 54 },
  { t: 'BEDOK', x: 2642, y: 1428, w: 168, size: 50 },
  { t: 'Singapore', x: 1955, y: 1170, w: 495, size: 108, kind: 'city' },
  { t: 'Jurong Island', x: 305, y: 1857, w: 465, size: 74, kind: 'island' },
  { t: 'Sentosa', x: 1740, y: 2085, w: 275, size: 74, kind: 'island' },
  { t: 'Pulau Ubin', x: 2810, y: 662, w: 360, size: 70, kind: 'island' },
  { t: 'Tekong Island', x: 3465, y: 640, w: 460, size: 70, kind: 'island' },
];

const TEXT_FILL = { area: '#8f7b62', city: '#544c40', island: '#4b5548', border: '#86847f', road: '#80603f' };

const Shapes = ({ list, fill }: { list: string[]; fill: string }) => (
  <g fill={fill}>{list.map((s, i) => <polygon key={i} points={pts(s)} />)}</g>
);

const Lines = ({ list, stroke, width, dash }: { list: string[]; stroke: string; width: number; dash?: string }) => (
  <g fill="none" stroke={stroke} strokeWidth={width} strokeLinejoin="round" strokeLinecap="round" strokeDasharray={dash}>
    {list.map((s, i) => <polyline key={i} points={pts(s)} />)}
  </g>
);

function Shield({ x, y, label }: { x: number; y: number; label: string }) {
  return (
    <g>
      <path d={`M${x - 56} ${y - 24}L${x} ${y - 36}L${x + 56} ${y - 24}V${y + 24}L${x} ${y + 36}L${x - 56} ${y + 24}z`} fill="#f8d648" stroke="#e3b93c" strokeWidth="4" />
      <text x={x} y={y + 19} fontSize="54" fontWeight="600" textAnchor="middle" fill="#5a4a1c">{label}</text>
    </g>
  );
}

function BaseMap() {
  return (
    <svg viewBox="18 30 3822 2100" className="h-[700px] w-[1274px] font-[Roboto,sans-serif]">
      <rect x="18" y="30" width="3822" height="2100" fill="#a3ccff" />
      <Shapes list={LAND} fill="#ebe9dd" />
      <Shapes list={URBAN} fill="#e9e7e4" />
      <Shapes list={PARK} fill="#d3e4ca" />
      <Shapes list={BRIGHT} fill="#cae6a6" />
      <Shapes list={PALE_WATER} fill="#a3ccff" />
      <Lines list={['a 440,180 480,185 530,150 580,150 620,190 660,240 705,258', 'a 610,190 615,230', 'a 860,40 880,90 930,120', 'a 710,100 760,50']} stroke="#a3ccff" width={14} />
      <Lines list={['b 960,535 1030,590 1080,600 1100,560', 'b 1060,595 1200,610', 'a 1110,680 1105,640']} stroke="#a3ccff" width={10} />
      <polygon points={pts('d 400,515 435,530 430,570 455,610 430,620 370,560 365,530')} fill="#dfdad3" />
      <g fill="#dadada">
        <polygon points={pts('b 940,560 970,540 910,670 880,680')} />
        <polygon points={pts('f 640,60 700,30 740,30 710,150 680,280 670,260 700,150 640,120')} />
      </g>
      <Lines list={WHITE_ROADS} stroke="#ffffff" width={9} />
      <Lines list={YELLOW_ROADS} stroke="#f3d795" width={17} />
      <Lines list={YELLOW_ROADS} stroke="#fde8a9" width={12} />
      <Lines list={ORANGE_ROADS} stroke="#eab67c" width={22} />
      <Lines list={ORANGE_ROADS} stroke="#fbce96" width={15} />
      <circle cx="179" cy="1195" r="17" fill="#fbce96" stroke="#eab67c" strokeWidth="6" />
      <Lines list={BORDER} stroke="#6c7075" width={9} />
      <Shield x={399} y={175} label="52" />
      <Shield x={968} y={138} label="J1" />
      <Shield x={2407} y={341} label="17" />
      <Shield x={3240} y={185} label="137" />
      {MAP_TEXT.map((m, i) => {
        const kind = m.kind ?? 'area';
        return (
          <text
            key={i}
            x={m.x}
            y={m.y}
            fontSize={m.size}
            fontWeight={kind === 'area' || kind === 'road' ? 600 : 500}
            fontStyle={kind === 'island' ? 'italic' : undefined}
            fill={TEXT_FILL[kind]}
            stroke="#ffffff"
            strokeOpacity="0.6"
            strokeWidth="9"
            strokeLinejoin="round"
            paintOrder="stroke"
            textLength={m.w}
            lengthAdjust="spacingAndGlyphs"
            transform={m.rot ? `rotate(${m.rot} ${m.x} ${m.y})` : undefined}
          >
            {m.t}
          </text>
        );
      })}
      <Lines list={RAIL} stroke="#000" width={13} dash="90 15" />
      {TOWNS.map((t, i) => (
        <polygon key={i} points={pts(t.shape)} fill={t.fill} fillOpacity="0.7" />
      ))}
      <g fill="none" stroke="#fff" strokeWidth="12" strokeLinejoin="round" strokeLinecap="round" strokeDasharray="18 18">
        {TOWNS.map((t, i) => <polygon key={i} points={pts(t.shape)} />)}
      </g>
      <polygon
        points={pts('d 715,48 650,135 605,175 545,197 520,263 550,272 560,295 805,295 925,256 928,275 905,330 968,318 957,290 961,213 923,165 935,144 985,144 985,66 905,56 860,40 a 820,1090 760,1090')}
        fill="#b00427"
        stroke="#666"
        strokeWidth="22"
        strokeLinejoin="round"
      />
    </svg>
  );
}

const BANDS: [string, string][] = [
  ['10,000 – 20,000 units', 'bg-[#ffffb2]/70'],
  ['20,000 – 30,000 units', 'bg-[#fed976]/50'],
  ['30,000 – 40,000 units', 'bg-[#feb24c]/50'],
  ['40,000 – 50,000 units', 'bg-[#fd8d3c]/50'],
  ['50,000 – 60,000 units', 'bg-[#fc4e2a]/50'],
  ['60,000 – 70,000 units', 'bg-[#e31a1c]/50'],
  ['70,000 – 80,000 units', 'bg-[#b10026]/50'],
];

function MapPanel() {
  return (
    <div className="relative h-[700px] w-[1274px] overflow-hidden font-['Liberation_Sans',Arial,sans-serif]">
      <BaseMap />
      <div className="absolute top-5 left-5 w-[68px] rounded-[8px] border-4 border-black/20 bg-clip-padding">
        <div className="flex h-[60px] items-center justify-center rounded-t-[4px] border-b-2 border-[#ccc] bg-white pt-[4px] pl-[3px]">
          <svg viewBox="0 0 24 24" className="h-6 w-6"><path d="M0 12H24M12 0V24" stroke="#000" strokeWidth="4.800" /></svg>
        </div>
        <div className="flex h-[60px] items-center justify-center rounded-b-[4px] bg-white pt-[2px] pl-[3px]">
          <svg viewBox="0 0 24 24" className="h-6 w-6"><path d="M0 12H24" stroke="#000" strokeWidth="4.800" /></svg>
        </div>
      </div>

      <div className="absolute top-[248px] left-[118px] h-[118px] w-[236px] rounded-[6px] bg-white pt-[14px] pl-[15px] text-[20px] leading-[30px] whitespace-nowrap text-[#222] shadow-[0_2px_6px_rgba(0,0,0,0.4)]">
        <div className="font-bold tracking-[-0.15px]">JURONG WEST</div>
        <div className="tracking-[0.15px]">73,510 apartment units</div>
        <div className="tracking-[0.1px]">74.48 units per hectare</div>
        <svg viewBox="0 0 20 10" className="absolute top-[117.500px] left-[108px] h-[10px] w-5"><path d="M0 0H20L10 10z" fill="#fff" /></svg>
      </div>

      <div className="absolute top-5 left-[900px] h-[318px] w-[354px] rounded-[10px] bg-white/80 pt-[14px] pl-4 text-[28px] text-[#555] shadow-[0_0_30px_rgba(0,0,0,0.2)]">
        <div className="h-[40px] pl-[1px] leading-[34px] font-bold tracking-[0.15px] whitespace-nowrap">Number of Apartments</div>
        {BANDS.map(([label, bg]) => (
          <div key={label} className="flex h-9 items-center">
            <span className={`h-9 w-9 shrink-0 ${bg}`} />
            <span className="ml-4 pt-px leading-9 tracking-[0.05px] whitespace-nowrap">{label}</span>
          </div>
        ))}
      </div>

      <div className="absolute top-[520px] left-[1036px] flex h-[128px] w-[218px] flex-col rounded-[10px] border-4 border-black/20 bg-white bg-clip-padding pt-[10px] pl-3 text-[24px] font-bold text-[#333]">
        {['Towns', 'Rail Network'].map((l) => (
          <div key={l} className="flex h-12 items-center">
            <span className="h-6 w-6 shrink-0 rounded-[5px] bg-[#3f99fb]"><Check /></span>
            <span className="mb-[5px] ml-[7px] leading-[30px] tracking-[0.2px] whitespace-nowrap">{l}</span>
          </div>
        ))}
      </div>

      <div className="absolute right-0 bottom-0 h-8 w-[174px] bg-white/70 pl-[9px] text-[22px] leading-8 whitespace-nowrap text-[#333]">
        <span className="text-[#0078a8]">Leaflet</span> | Google
      </div>
    </div>
  );
}

/* ---------- Page ---------- */

export default function App() {
  return (
    <div className="flex h-[1354px] w-[2530px] flex-col overflow-hidden bg-[#ecf0f5]">
      <header className="flex h-[100px] shrink-0 bg-[#1ba760]">
        <div className="flex w-[600px] items-center justify-center bg-[#148e4f] font-[Inter,'Liberation_Sans',sans-serif] text-[39px] font-light tracking-[-0.8px] whitespace-nowrap text-white">
          HDB Singapore Census
        </div>
        <div className="flex flex-col justify-center gap-[3.500px] pl-[29px]">
          <div className="h-[5px] w-[26px] rounded-[1px] bg-white" />
          <div className="h-[5px] w-[26px] rounded-[1px] bg-white" />
          <div className="h-[5px] w-[26px] rounded-[1px] bg-white" />
        </div>
      </header>
      <div className="flex flex-1">
        <Sidebar />
        <main className="flex flex-1 items-start gap-[10px] pl-[10px]">
          <section className="h-[1250px] w-[626px] bg-white"><RankCharts /></section>
          <section className="flex h-[1250px] w-[1274px] flex-col bg-white">
            <MapPanel />
            <BreakdownChart />
          </section>
        </main>
      </div>
    </div>
  );
}
